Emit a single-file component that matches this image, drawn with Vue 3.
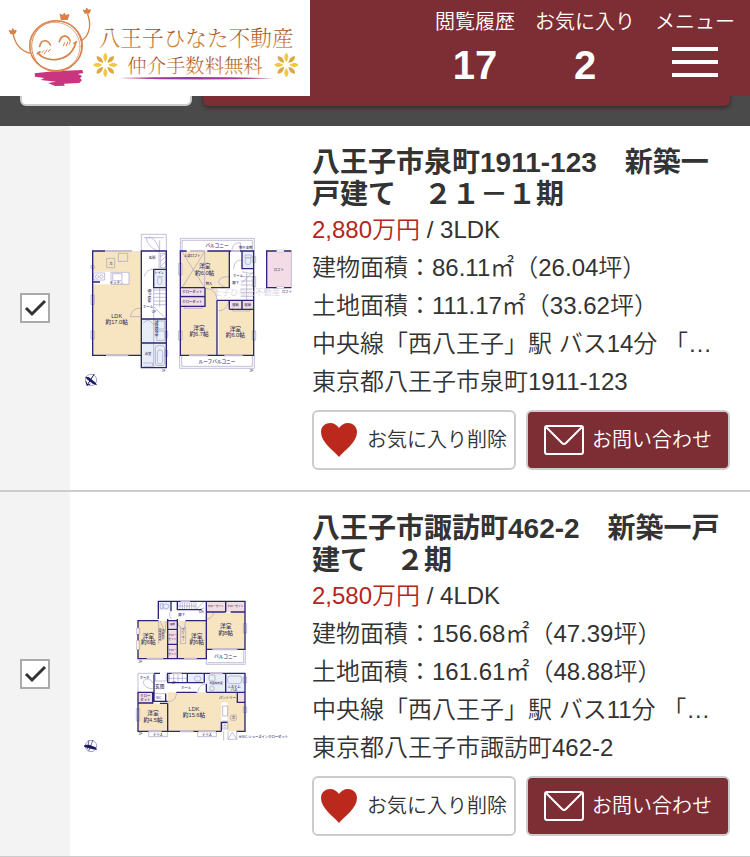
<template>
  <div class="page">
    <header class="header">
      <a class="logo" href="#" aria-label="八王子ひなた不動産">
        <svg viewBox="0 0 930 288">
          <defs>
            <linearGradient id="logo-text" x1="0" y1="0" x2="0" y2="1">
              <stop offset="0" stop-color="#9a4a1c" />
              <stop offset="1" stop-color="#e0913a" />
            </linearGradient>
            <linearGradient id="logo-line">
              <stop offset="0" stop-color="#c23a85" />
              <stop offset="0.4" stop-color="#8d3f98" />
              <stop offset="1" stop-color="#b93a88" />
            </linearGradient>
            <g id="flower">
              <g v-for="n in 8" :key="n" :transform="`rotate(${n * 45})`">
                <path d="M0-9C-8-20-8-29 0-37C8-29 8-20 0-9Z" :fill="n % 2 ? '#dda73f' : '#efc943'" />
              </g>
            </g>
          </defs>
          <path
            d="M104 220L160 214L247 210L250 219L234 222L246 228L240 235L246 240L238 249L192 251L194 257L165 258L144 249L168 245L122 240L133 234L105 230Z"
            fill="#c9357f"
          />
          <g fill="none" stroke="#d8824a" stroke-width="4" stroke-linecap="round" stroke-linejoin="round">
            <ellipse cx="168" cy="137" rx="79" ry="75" />
            <ellipse cx="170" cy="139" rx="75" ry="76" stroke-width="3" />
            <ellipse cx="165" cy="140" rx="75" ry="73" stroke-width="2" />
            <path d="M39 101C45 130 61 152 88 159M263 43C275 76 268 105 247 120" />
            <path d="M33 101L29 92L36 95L38 87L42 93L48 92L44 100ZM255 39L251 31L258 33L260 25L264 31L271 30L267 39Z" fill="#d8824a" />
            <path d="M184 58L181 43L188 48L193 41L197 48L206 44L202 58Z" fill="#d8824a" />
            <path d="M119 139C124 116 144 119 151 135M178 125C184 102 203 105 210 121" stroke-width="5" />
            <path d="M131 152L126 158M141 150L133 161M151 148L145 155M194 128L190 137M203 126L199 137M211 125L207 133" stroke-width="3" />
            <path d="M112 161L120 155M114 158C136 190 211 190 228 127M222 130L230 125" stroke-width="5" />
          </g>
          <text x="296" y="137" class="logo-text" font-size="65" fill="url(#logo-text)">八王子ひなた不動産</text>
          <text x="382" y="220" class="logo-text" font-size="58" fill="url(#logo-text)">仲介手数料無料</text>
          <path d="M355 234Q588 227 820 235Q588 243 355 234Z" fill="url(#logo-line)" />
          <use href="#flower" x="316" y="195" />
          <use href="#flower" x="859" y="195" />
        </svg>
      </a>
      <nav class="nav">
        <a class="nav-item" href="#">
          <span>閲覧履歴</span>
          <strong>17</strong>
        </a>
        <a class="nav-item" href="#">
          <span>お気に入り</span>
          <strong>2</strong>
        </a>
        <button class="nav-item" type="button">
          <span>メニュー</span>
          <span class="hamburger"><i></i><i></i><i></i></span>
        </button>
      </nav>
    </header>

    <div class="toolbar">
      <button class="toolbar-button" type="button"></button>
      <button class="toolbar-button toolbar-button--primary" type="button"></button>
    </div>

    <main>
      <article v-for="item in items" :key="item.id" class="item">
        <label class="item-check">
          <input v-model="item.checked" type="checkbox" :aria-label="item.title" />
          <svg v-if="item.checked" viewBox="0 0 30 30">
            <path d="M6 15L12 21L25 8" fill="none" stroke="#333" stroke-width="3" />
          </svg>
        </label>

        <div class="item-plan">
          <svg v-if="item.id === 1" viewBox="0 0 645 498">
            <!-- 1F -->
            <path d="M38 78H184V391H38Z" fill="#f6e5c0" />
            <path d="M38 140H147V178H38Z" fill="#fff" />
            <path d="M184 282H259V428H184ZM221 133H259V188H221Z" fill="#e8eef7" />
            <g class="thin">
              <path d="M184 78V28H259V78M192 38H251M239 78V46M239 78C225 76 204 65 199 40L210 36C225 42 235 60 239 78" />
              <path d="M80 100H104V128H80ZM115 85H143V109H115ZM93 142H147V178H93ZM98 146H126V167H98ZM41 144H74V165H41Z" />
              <circle cx="51" cy="155" r="5" /><circle cx="64" cy="155" r="5" />
              <path d="M237 78V130M241 85H257V128H241ZM241 95L257 85M241 110L257 95M241 125L257 110M221 188V282M221 195H257M221 206H257M221 217H257M221 228H257M221 239H257M239 190V245M221 245L257 280" />
              <path d="M184 250C166 248 155 257 151 275H184M221 133C207 132 196 142 193 154M190 295C200 280 214 288 221 300M221 282V353M230 318H255V346H230ZM232 288H254V312H232ZM190 414H218V424H190M221 355V428" />
              <rect x="226" y="362" width="28" height="60" rx="8" /><rect x="232" y="375" width="16" height="42" rx="7" />
              <ellipse cx="239" cy="168" rx="7" ry="11" /><path d="M230 155H249" />
              <path d="M33 122H43V130H33ZM33 210H43V238H33ZM33 318H43V342H33ZM255 318H263V338H255ZM255 376H263V394H255Z" />
            </g>
            <path class="wall" d="M154 78H38V391H184V78H259V428H184V391M184 282H259M184 354H259M221 133H259M221 133V188H259M38 171H60M184 130V190" />
            <path d="M75 78H154M78 391H145" stroke="#c8bdd0" stroke-width="6" />
            <g class="label">
              <text x="110" y="279" class="label-lg">LDK</text>
              <text x="110" y="298" class="label-lg">約17.0帖</text>
              <text x="216" y="101">玄関</text><text x="93" y="119">冷</text><text x="110" y="176">キッチン</text>
              <text x="238" y="148">トイレ</text><text x="204" y="250">ホール</text><text x="204" y="391">浴室</text><text x="251" y="440">1F</text>
              <text transform="translate(204 212) rotate(90)">廊下収納</text><text transform="translate(225 310) rotate(90)">洗面脱衣室</text>
              <text x="222" y="265">UP</text>
            </g>
            <!-- 2F -->
            <path d="M301 78H448V188H301ZM301 188H411V391H301ZM416 226H521V391H416Z" fill="#f6e5c0" />
            <path d="M301 188H375V244H301ZM448 226H521V253H448Z" fill="#f3dce5" />
            <path d="M486 78H521V131H486Z" fill="#e8eef7" />
            <g class="thin">
              <path d="M301 78V40H523V78M306 78V46H517V78M299 391V430H523V391M305 391V424H517V391" />
              <path d="M306 80L374 188M374 80L306 188M374 80V188" />
              <path d="M482 78V54C468 51 458 60 456 75M448 188C436 188 420 184 416 170C420 156 436 154 448 156M461 130C463 112 472 104 482 106M411 226C412 205 397 192 378 190M416 257C430 258 443 245 447 228" />
              <path d="M486 140C500 145 515 145 521 145M484 155H521M482 168H521M482 180H521M482 192H521M482 203H521M482 214H521M500 145V226M484 175L521 140" />
              <path d="M301 213H375M313 241V250H367V241M458 248V258H510V248M486 226V253M495 90H514V98H495Z" /><ellipse cx="504" cy="108" rx="9" ry="11" />
              <path d="M296 115H306V150H296ZM296 318H306V345H296ZM517 318H527V345H517ZM517 95H527V112H517ZM517 155H527V185H517Z" />
            </g>
            <path class="wall" d="M320 78H301V391H521V78H382M301 188H375M393 188H448V78M301 215H375V244H301M375 188V244M411 226V391M411 226H521M448 226V253M448 253H486V226M486 253H521M486 78V131H521M448 145V188" />
            <path d="M330 78H375M327 391H383M433 391H488M453 78H480" stroke="#c8bdd0" stroke-width="6" />
            <text x="400" y="211" class="watermark">王子ひなた不動産</text>
            <g class="label">
              <text x="411" y="65" class="label-md">バルコニー</text><text x="411" y="413" class="label-md">ルーフバルコニー</text>
              <text x="337" y="95">上部ロフト</text><text x="374" y="130" class="label-lg">洋室</text><text x="374" y="149" class="label-lg">約6.0帖</text>
              <text x="337" y="205">クローゼット</text><text x="337" y="234">クローゼット</text><text x="387" y="180">物入</text>
              <text x="357" y="315" class="label-lg">洋室</text><text x="357" y="333" class="label-lg">約6.7帖</text>
              <text x="466" y="317" class="label-lg">洋室</text><text x="466" y="336" class="label-lg">約6.0帖</text>
              <text x="467" y="176">廊下</text><text x="474" y="155">ホール</text><text x="466" y="243">収納</text><text x="503" y="243">収納</text>
              <text x="497" y="73">物干金物</text><text x="514" y="440">2F</text>
            </g>
            <!-- loft -->
            <path d="M560 78H634V188H560Z" fill="#f3dce5" />
            <path d="M634 78V188" class="thin" />
            <path class="wall" d="M634 78H560V188H634" />
            <path d="M590 75H612V81H590ZM590 185H612V191H590Z" fill="#fff" stroke="#8581b4" />
            <g class="label"><text x="597" y="137">ロフト</text><text x="621" y="204">ロフト</text></g>
            <g transform="translate(33 465)">
              <circle r="17" fill="none" stroke="#7775ad" stroke-width="2" />
              <path d="M-18-10L-6-8L14 8L18 16L6 12L-12-2Z" fill="#1d1963" />
              <path d="M-12 16L10-18M-15 4L-12 16L-2 12" fill="none" stroke="#1d1963" stroke-width="3" />
            </g>
          </svg>

          <svg v-else viewBox="0 0 645 498">
            <!-- 2F -->
            <path d="M174 89H263V203H174ZM292 89H379V203H292ZM379 65H495V175H379Z" fill="#f6e5c0" />
            <path d="M263 89H292V112H263ZM263 118H292V158H263ZM263 163H292V203H263ZM379 31H495V63H379Z" fill="#f3dce5" />
            <path d="M235 31H273V58H235Z" fill="#e8eef7" />
            <g class="thin">
              <path d="M379 178V220H496V178M383 215H491V178M437 31V63M401 65C399 76 391 84 380 84M292 92C294 105 301 112 312 115L317 90M240 89L255 125L259 89M275 83C267 78 266 63 275 59" />
              <path d="M293 34V56M300 34V56M307 34V56M314 34V56M321 34V56M328 34V56M335 34V56M342 34V56M293 45H348M348 34V56L373 31M355 56L374 51" />
              <path d="M241 38H249V53H241Z" /><ellipse cx="258" cy="46" rx="9" ry="7" />
              <path d="M236 89V158M302 106V158H317V106M170 111H179V130H170ZM170 148H179V176H170ZM490 98H500V126H490Z" />
            </g>
            <path class="wall" d="M174 110V89H235M174 130V148M174 176V203H379V56M235 84V31H495V175H379M273 31V60M292 31V56H365M379 31V63H437M452 63H495M437 31V63M263 84V203M292 84V203M263 89H292M263 115H292M263 160H292M317 89H379" />
            <path d="M200 203H250M312 203H350M397 175H472M302 31H330" stroke="#c8bdd0" stroke-width="6" />
            <g class="label">
              <text x="205" y="142" class="label-lg">洋室</text><text x="205" y="160" class="label-lg">約6帖</text>
              <text x="350" y="142" class="label-lg">洋室</text><text x="350" y="160" class="label-lg">約6帖</text>
              <text x="437" y="112" class="label-lg">洋室</text><text x="437" y="131" class="label-lg">約8帖</text>
              <text x="407" y="49" class="label-sm">クローゼット</text><text x="466" y="49" class="label-sm">クローゼット</text><text x="305" y="75">廊下</text><text x="364" y="67">DN</text>
              <text x="277" y="101" class="label-sm">収納</text><text x="277" y="135" class="label-sm">クロー</text><text x="277" y="146" class="label-sm">ゼット</text>
              <text x="277" y="180" class="label-sm">クロー</text><text x="277" y="191" class="label-sm">ゼット</text>
              <text transform="translate(236 130) rotate(90)" class="label-sm">可動間仕切</text><text transform="translate(247 130) rotate(90)" class="label-sm">将来対応</text><text transform="translate(307 130) rotate(90)" class="label-sm">カウンター</text>
              <text x="437" y="201" class="label-md">バルコニー</text><text x="181" y="216">2F</text>
            </g>
            <!-- 1F -->
            <path d="M174 337H263V421H174ZM263 304H495V421H263Z" fill="#f6e5c0" />
            <path d="M174 304H218V336H174ZM472 308H495V334H472Z" fill="#f3dce5" />
            <path d="M379 247H495V304H379ZM322 247H373V275H322Z" fill="#e8eef7" />
            <path d="M424 334H442V421H424Z" fill="#fff" />
            <g class="thin">
              <path d="M174 247V304M174 247H222M218 276C212 260 194 261 190 272C191 287 205 293 218 293M226 247V270H259V247M268 250V275M281 250V275M294 250V275M307 250V275M263 262H320M222 308H259M222 331H260M263 331C278 334 289 322 289 307M353 306C355 288 365 280 376 278" />
              <path d="M206 421V437H263V421M353 421V437H409V421M431 421V448M444 422V445H470V422M444 445L457 424L470 445M428 345H443V375H428ZM427 390H443V414H427Z" />
              <rect x="443" y="255" width="42" height="23" rx="8" /><rect x="387" y="252" width="18" height="18" rx="4" /><circle cx="396" cy="292" r="7" />
              <circle cx="435" cy="396" r="4" /><circle cx="435" cy="407" r="4" /><ellipse cx="353" cy="263" rx="10" ry="8" />
              <rect x="452" y="372" width="17" height="16" rx="3" /><path d="M169 353H179V390H169ZM490 348H500V365H490ZM490 258H500V276H490Z" />
            </g>
            <path class="wall" d="M222 250V331H263M263 421H174V304H218V336H174M222 247H240M263 275V247H495V421H470M263 275H370M322 247V275M373 247V275M263 337V421H424M424 421V394H442M263 337H240M289 304H350M379 304H495M379 304V278M437 247V304M472 304V334H495M257 308V331" />
            <path d="M205 421H245M300 421H340M355 421H408M390 247H428M275 247H305" stroke="#c8bdd0" stroke-width="6" />
            <g class="label">
              <text x="219" y="373" class="label-lg">洋室</text><text x="219" y="392" class="label-lg">約4.5帖</text>
              <text x="342" y="360" class="label-lg">LDK</text><text x="342" y="379" class="label-lg">約15.6帖</text>
              <text x="194" y="263">ポーチ</text><text x="239" y="290" class="label-md">玄関</text><text x="236" y="323">SIC</text>
              <text x="196" y="318">クロー</text><text x="196" y="329">ゼット</text><text x="318" y="293">ホール</text><text x="282" y="279">UP</text>
              <text x="408" y="279" class="label-sm">洗面脱衣室</text><text x="462" y="290">システム</text><text x="462" y="301">バス</text>
              <text x="442" y="324">パントリー</text><text x="460" y="384">冷</text><text x="234" y="434">テラス</text><text x="381" y="434">テラス</text>
              <text x="181" y="432">1F</text><text x="550" y="441">※SIC:シューズインクローゼット</text>
            </g>
            <g transform="translate(33 465)">
              <circle r="17" fill="none" stroke="#7775ad" stroke-width="2" />
              <path d="M-20-3L-6-4L14 4L18 12L2 9L-20 3Z" fill="#1d1963" />
              <path d="M-7 15L6-18M-6-17L-11 9" fill="none" stroke="#1d1963" stroke-width="2" />
            </g>
          </svg>
        </div>

        <div class="item-body">
          <h2>{{ item.title }}</h2>
          <p><span class="price">{{ item.price }}</span> / {{ item.layout }}</p>
          <p>建物面積：{{ item.building }}</p>
          <p>土地面積：{{ item.land }}</p>
          <p class="access">{{ item.access }}</p>
          <p>{{ item.address }}</p>
          <div class="actions">
            <button class="action" type="button">
              <svg class="heart" viewBox="0 0 36 34">
                <path d="M18 34C12 27 0 19 0 9C0 3 5 0 9 0C13 0 16 2 18 5C20 2 23 0 27 0C31 0 36 3 36 9C36 19 24 27 18 34Z" fill="#bb281c" />
              </svg>
              お気に入り削除
            </button>
            <button class="action action--primary" type="button">
              <svg class="mail" viewBox="0 0 40 30">
                <g fill="none" stroke="#fff" stroke-width="2">
                  <rect x="1" y="1" width="38" height="28" rx="2" />
                  <path d="M2 2L18 18Q20 20 22 18L38 2" />
                </g>
              </svg>
              お問い合わせ
            </button>
          </div>
        </div>
      </article>
    </main>
  </div>
</template>

<script setup>
import { ref } from 'vue';

const items = ref([
  {
    id: 1,
    checked: true,
    title: '八王子市泉町1911-123　新築一戸建て　２１－１期',
    price: '2,880万円',
    layout: '3LDK',
    building: '86.11㎡（26.04坪）',
    land: '111.17㎡（33.62坪）',
    access: '中央線「西八王子」駅 バス14分 「…',
    address: '東京都八王子市泉町1911-123',
  },
  {
    id: 2,
    checked: true,
    title: '八王子市諏訪町462-2　新築一戸建て　２期',
    price: '2,580万円',
    layout: '4LDK',
    building: '156.68㎡（47.39坪）',
    land: '161.61㎡（48.88坪）',
    access: '中央線「西八王子」駅 バス11分 「…',
    address: '東京都八王子市諏訪町462-2',
  },
]);
</script>

<style>
body {
  margin: 0;
  background: #fff;
}
</style>

<style scoped>
.page {
  font-family: "Liberation Sans", "Noto Sans CJK JP", sans-serif;
  font-weight: 350;
  color: #333;
}

.page *,
.page {
  box-sizing: border-box;
}

button {
  font: inherit;
  color: inherit;
  cursor: pointer;
}

svg {
  display: block;
}

/* Header */
.header {
  position: fixed;
  top: 0;
  left: 0;
  right: 0;
  z-index: 1;
  display: flex;
  justify-content: space-between;
  height: 96px;
  background: #7d2d34;
}

.logo {
  width: 310px;
  background: #fff;
}

.logo-text {
  font-family: "Liberation Serif", "Noto Serif CJK JP", "Noto Sans CJK JP", serif;
}

.nav {
  display: flex;
  gap: 20px;
  padding: 7px 15px 0 0;
}

.nav-item {
  display: flex;
  flex-direction: column;
  align-items: center;
  padding: 0;
  border: none;
  background: none;
  color: #fff;
  font-size: 20px;
  line-height: 30px;
  text-decoration: none;
}

.nav-item strong {
  font-size: 40px;
  font-weight: 700;
  line-height: 56px;
}

.hamburger {
  display: flex;
  flex-direction: column;
  gap: 9px;
  width: 46px;
  padding-top: 10px;
}

.hamburger i {
  height: 4px;
  background: #fff;
}

/* Bar that scrolls under the header */
.toolbar {
  display: flex;
  gap: 11px;
  padding: 46px 20px 20px;
  background: #4a4a4a;
}

.toolbar-button {
  flex: 0 0 172px;
  height: 60px;
  border: 2px solid #ccc;
  border-radius: 6px;
  background: #fff;
}

.toolbar-button--primary {
  flex: 1;
  border: none;
  background: #7d2d34;
  box-shadow: 0 2px 4px rgba(0, 0, 0, 0.4);
}

/* List */
.item {
  display: grid;
  grid-template-columns: 70px minmax(0, 242px) minmax(0, 1fr);
  border-bottom: 2px solid #ccc;
}

.item-check {
  display: grid;
  place-content: center;
  background: #f3f3f3;
  cursor: pointer;
}

.item-check input,
.item-check svg {
  grid-area: 1 / 1;
  width: 30px;
  height: 30px;
  margin: 0;
}

.item-check input {
  appearance: none;
  border: 2px solid #aaa;
  background: #fff;
}

.item-check svg {
  z-index: 0;
  pointer-events: none;
}

.item-plan {
  display: flex;
  align-items: center;
  padding: 0 17px 0 10px;
}

.item-plan svg {
  width: 100%;
}

.wall {
  fill: none;
  stroke: #2a2577;
  stroke-width: 4;
}

.thin {
  fill: none;
  stroke: #a3a0c4;
  stroke-width: 2;
}

.label {
  fill: #34305f;
  font-size: 10px;
  font-weight: 500;
  text-anchor: middle;
}

.label-sm {
  font-size: 8px;
}

.label-md {
  font-size: 14px;
}

.label-lg {
  font-size: 17px;
}

.watermark {
  fill: #d5d5de;
  font-size: 25px;
}

.item-body {
  padding: 21px 20px 20px 0;
  font-size: 24px;
  line-height: 38px;
}

h2 {
  margin: 0;
  font-size: 28px;
  font-weight: 700;
  line-height: 32px;
}

p {
  margin: 0;
}

.price {
  color: #b3261e;
}

.access {
  overflow: hidden;
  text-overflow: ellipsis;
  white-space: nowrap;
}

.actions {
  display: grid;
  grid-template-columns: 1fr 1fr;
  gap: 10px;
  margin-top: 9px;
}

.action {
  display: flex;
  align-items: center;
  justify-content: center;
  gap: 10px;
  height: 60px;
  padding: 0;
  border: 2px solid #ccc;
  border-radius: 6px;
  background: #fff;
  font-size: 20px;
  line-height: 30px;
  white-space: nowrap;
}

.action--primary {
  gap: 8px;
  background: #7d2d34;
  color: #fff;
}

.heart {
  width: 36px;
  height: 34px;
}

.mail {
  width: 40px;
  height: 30px;
}
</style>
